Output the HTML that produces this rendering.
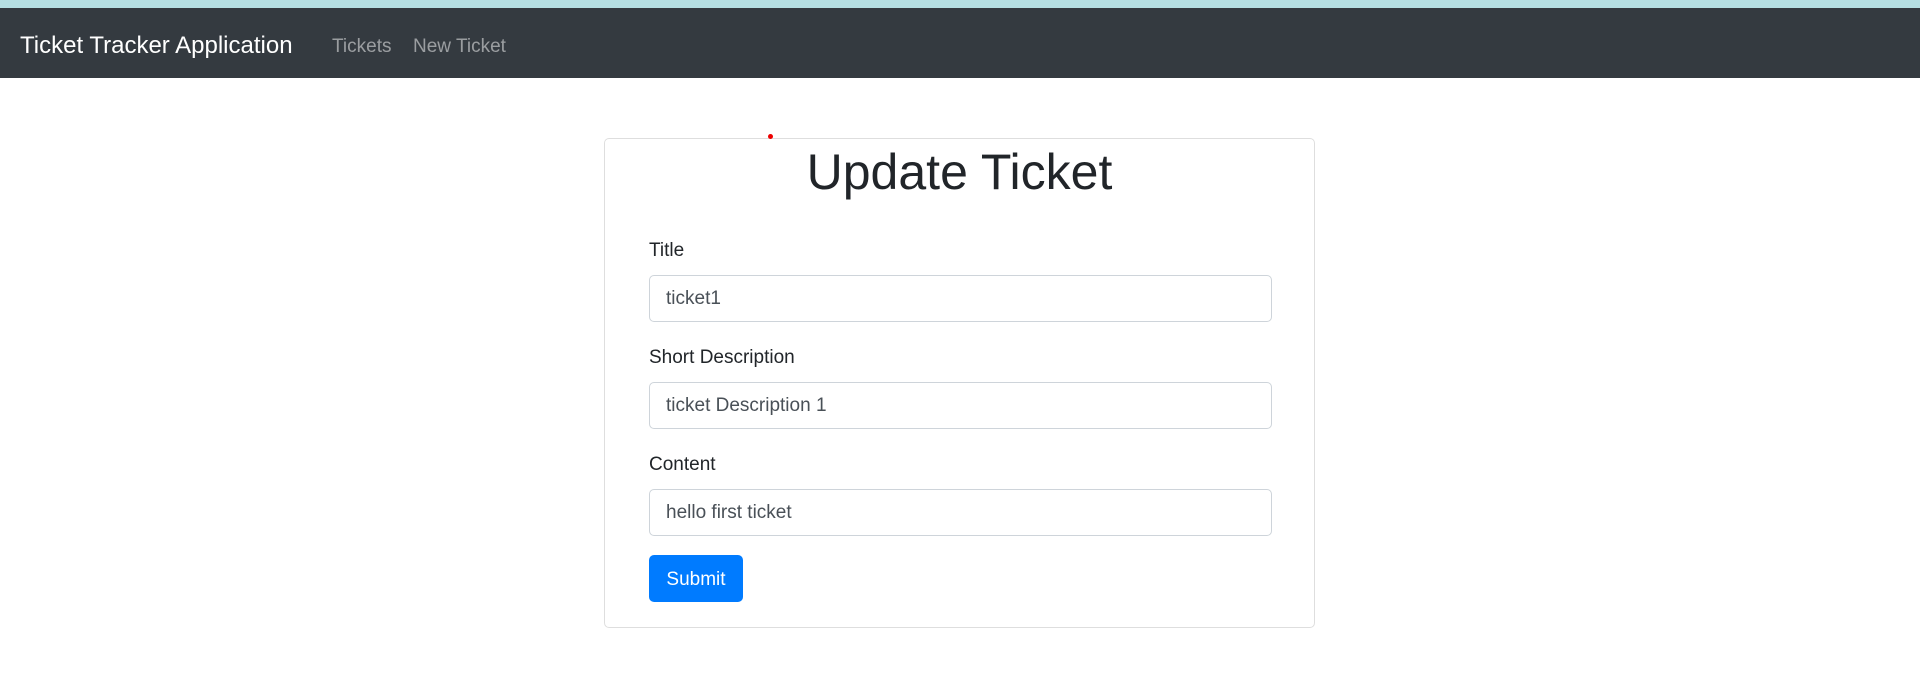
<!DOCTYPE html>
<html><head><style>
body{margin:0;width:1920px;height:688px;background:#fff;font-family:"Liberation Sans",sans-serif;color:#212529;position:relative;overflow:hidden}
.top{position:absolute;left:0;top:0;width:1920px;height:8px;background:#b5dfe3}
.nav{position:absolute;left:0;top:8px;width:1920px;height:70px;background:#343a40}
.brand{position:absolute;left:20px;top:24px;font-size:24px;color:#fff}
.link{position:absolute;top:28px;font-size:19px;color:rgba(255,255,255,.5)}
.card{position:absolute;left:604px;top:138px;width:709px;height:488px;border:1px solid rgba(0,0,0,.13);border-radius:5px}
h1{position:absolute;left:0;width:100%;top:3px;margin:0;text-align:center;font-size:50px;font-weight:500;line-height:60px}
.lab{position:absolute;left:44px;font-size:19px}
.inp{position:absolute;left:44px;border:1px solid #ced4da;border-radius:5px;box-sizing:border-box;width:623px;height:47px;font-size:19px;color:#495057;padding-left:16px;line-height:45px}
.btn{position:absolute;left:44px;top:416px;width:94px;height:47px;background:#007bff;border-radius:5px;color:#fff;font-size:19px;line-height:50px;text-align:center}
.dot{position:absolute;left:768px;top:134px;width:5px;height:5px;border-radius:50%;background:#e00}
</style></head><body>
<div class="top"></div>
<div class="nav"><div class="brand">Ticket Tracker Application</div><div class="link" style="left:332px">Tickets</div><div class="link" style="left:413px">New Ticket</div></div>
<div class="card">
<h1>Update Ticket</h1>
<div class="lab" style="top:101px">Title</div>
<div class="inp" style="top:136px">ticket1</div>
<div class="lab" style="top:208px">Short Description</div>
<div class="inp" style="top:243px">ticket Description 1</div>
<div class="lab" style="top:315px">Content</div>
<div class="inp" style="top:350px">hello first ticket</div>
<div class="btn">Submit</div>
</div>
<div class="dot"></div>
</body></html>
